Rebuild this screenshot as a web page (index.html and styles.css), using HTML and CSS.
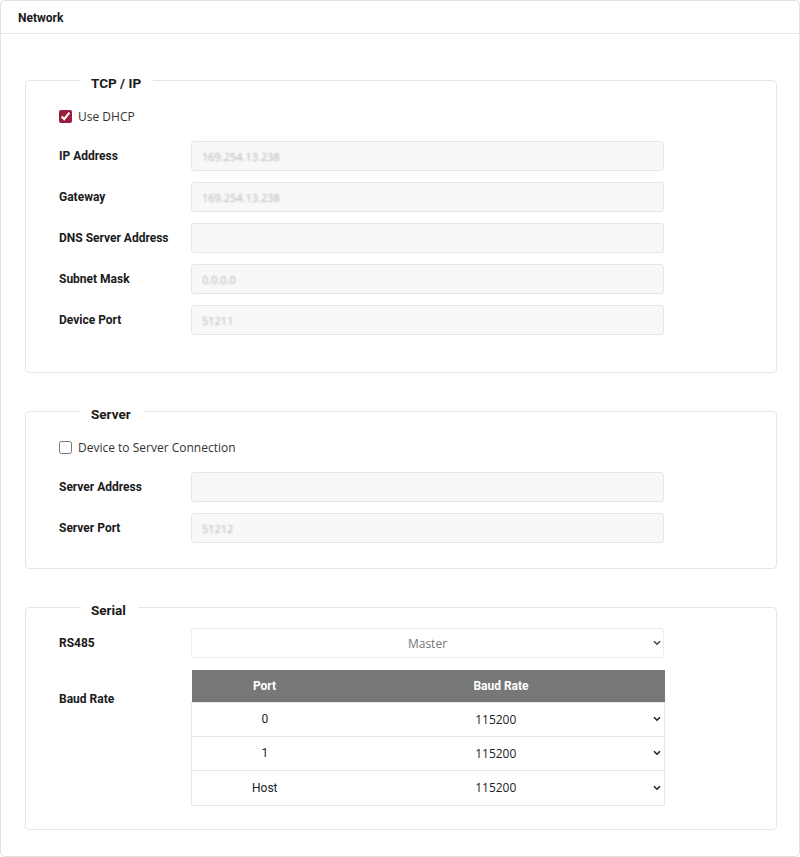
FILE: index.html
```html
<!DOCTYPE html>
<html>
<head>
<meta charset="utf-8">
<link rel="stylesheet" href="styles.css">
</head>
<body>
<div class="card">
  <div class="card-header">Network</div>

  <section class="group group-tcp">
    <span class="legend">TCP / IP</span>
    <label class="check-row"><input type="checkbox" checked><span>Use DHCP</span></label>
    <div class="rows">
      <div class="row"><span class="label">IP Address</span><input class="field" readonly value="169.254.13.238"></div>
      <div class="row"><span class="label">Gateway</span><input class="field" readonly value="169.254.13.238"></div>
      <div class="row"><span class="label">DNS Server Address</span><input class="field" readonly value=""></div>
      <div class="row"><span class="label">Subnet Mask</span><input class="field" readonly value="0.0.0.0"></div>
      <div class="row"><span class="label">Device Port</span><input class="field" readonly value="51211"></div>
    </div>
  </section>

  <section class="group group-server">
    <span class="legend">Server</span>
    <label class="check-row"><input type="checkbox"><span>Device to Server Connection</span></label>
    <div class="rows">
      <div class="row"><span class="label">Server Address</span><input class="field" readonly value=""></div>
      <div class="row"><span class="label">Server Port</span><input class="field" readonly value="51212"></div>
    </div>
  </section>

  <section class="group group-serial">
    <span class="legend">Serial</span>
    <div class="rows">
      <div class="row">
        <span class="label">RS485</span>
        <div class="select-wrap">
          <select class="select master"><option>Master</option></select>
          <svg class="chev" width="8" height="6" viewBox="0 0 8 6"><path d="M1 1.2 L4 4.2 L7 1.2" fill="none" stroke="#444" stroke-width="1.6"/></svg>
        </div>
      </div>
      <div class="row row-top">
        <span class="label label-baud">Baud Rate</span>
        <table class="baud">
          <thead><tr><th class="col-port">Port</th><th>Baud Rate</th></tr></thead>
          <tbody>
            <tr><td class="col-port">0</td><td><div class="select-wrap"><select class="select cell"><option>115200</option></select><svg class="chev" width="8" height="6" viewBox="0 0 8 6"><path d="M1 1.2 L4 4.2 L7 1.2" fill="none" stroke="#222" stroke-width="1.6"/></svg></div></td></tr>
            <tr><td class="col-port">1</td><td><div class="select-wrap"><select class="select cell"><option>115200</option></select><svg class="chev" width="8" height="6" viewBox="0 0 8 6"><path d="M1 1.2 L4 4.2 L7 1.2" fill="none" stroke="#222" stroke-width="1.6"/></svg></div></td></tr>
            <tr class="last"><td class="col-port">Host</td><td><div class="select-wrap"><select class="select cell"><option>115200</option></select><svg class="chev" width="8" height="6" viewBox="0 0 8 6"><path d="M1 1.2 L4 4.2 L7 1.2" fill="none" stroke="#222" stroke-width="1.6"/></svg></div></td></tr>
          </tbody>
        </table>
      </div>
    </div>
  </section>
</div>
</body>
</html>
```

FILE: styles.css
```css
* { box-sizing: border-box; }
html, body { margin: 0; padding: 0; background: #fff; }
body { font-family: Roboto, "Liberation Sans", sans-serif; color: #222; }

.card {
  width: 800px;
  height: 857px;
  border: 1px solid #e2e2e2;
  border-radius: 5px;
  background: #fff;
  overflow: hidden;
}
.card-header {
  height: 33px;
  padding: 2px 0 0 17px;
  line-height: 30px;
  font-size: 12px;
  font-weight: 700;
  color: #1a1a1a;
  border-bottom: 1px solid #e6e6e6;
}

.group {
  position: relative;
  margin: 46px 22px 0 24px;
  border: 1px solid #e6e6e6;
  border-radius: 4px;
  padding: 27px 0 37px 33px;
}
.group-server { margin-top: 38px; padding-bottom: 25px; }
.group-serial { margin-top: 38px; padding-top: 20px; padding-bottom: 23px; }

.legend {
  position: absolute;
  top: -6px;
  left: 55px;
  padding: 0 12px 0 10px;
  background: #fff;
  font-size: 13.5px;
  font-weight: 700;
  line-height: 16px;
  color: #1a1a1a;
}

.check-row {
  display: flex;
  align-items: center;
  gap: 6px;
  height: 16px;
  margin-bottom: 17px;
  font-family: "Open Sans", "Noto Sans", sans-serif;
  font-size: 12px;
  color: #333;
}
.check-row input {
  margin: 0;
  width: 13px;
  height: 13px;
  accent-color: #9b1d3d;
}

.rows { display: flex; flex-direction: column; gap: 11px; }
.row { display: grid; grid-template-columns: 132px 473px; align-items: center; }
.row-top { align-items: start; margin-top: 1px; }
.label { font-size: 12px; font-weight: 700; color: #1a1a1a; line-height: 16px; }
.label-baud { margin-top: 21px; }

.field {
  width: 473px;
  height: 30px;
  margin: 0;
  padding: 0 10px;
  border: 1px solid #e6e6e6;
  border-radius: 3px;
  background: #f8f8f8;
  font-family: "Open Sans", sans-serif;
  font-size: 11px;
  color: transparent;
  text-shadow: 0 0 2px rgba(0,0,0,0.28);
  outline: none;
}

.select-wrap { position: relative; }
.select {
  appearance: none;
  -webkit-appearance: none;
  width: 100%;
  margin: 0;
  font-family: "Open Sans", sans-serif;
  font-size: 12px;
  outline: none;
}
.select.master {
  height: 30px;
  border: 1px solid #ececec;
  border-radius: 3px;
  background: #fff;
  color: #777;
  text-align: center;
  text-align-last: center;
}
.chev { position: absolute; right: 3px; top: 50%; margin-top: -3px; pointer-events: none; }

.baud {
  width: 474px;
  border-collapse: collapse;
  font-size: 12px;
}
.baud th {
  height: 32px;
  background: #777;
  color: #fff;
  font-weight: 700;
  padding: 0;
  border: none;
}
.baud .col-port { width: 146px; }
.baud td {
  height: 34px;
  padding: 0;
  text-align: center;
  border-top: 1px solid #e8e8e8;
  border-bottom: 1px solid #e8e8e8;
}
.baud tr.last td { height: 35px; }
.baud tbody tr td:first-child { border-left: 1px solid #e8e8e8; color: #222; }
.baud tbody tr td:last-child { border-right: 1px solid #e8e8e8; }
.select.cell {
  height: 32px;
  border: none;
  background: transparent;
  color: #222;
  text-align: center;
  text-align-last: center;
  padding-right: 10px;
}
```
